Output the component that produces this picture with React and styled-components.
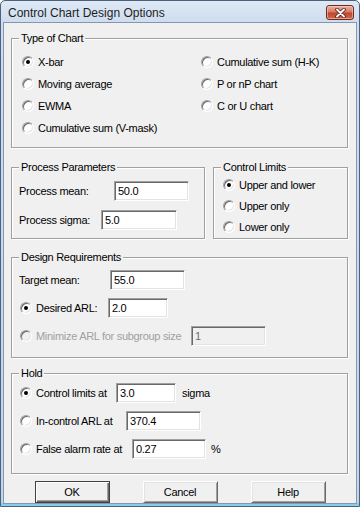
import styled, { createGlobalStyle } from "styled-components";

const GlobalStyle = createGlobalStyle`
  html, body {
    margin: 0;
    padding: 0;
    background: #ffffff;
  }
  body {
    font-family: "Liberation Sans", Arial, sans-serif;
    font-size: 11px;
    letter-spacing: -0.3px;
    color: #000000;
  }
`;

const Window = styled.div`
  width: 360px;
  height: 507px;
  box-sizing: border-box;
  display: flex;
  flex-direction: column;
  border: 1px solid #4c627c;
  border-radius: 5px 5px 0 0;
  padding: 0 2px 2px 2px;
  background: linear-gradient(
    180deg,
    #dfe9f5 0px,
    #cddcef 22px,
    #c2d5ec calc(100% - 3px),
    #86cdef calc(100% - 3px)
  );
`;

const TitleBar = styled.div`
  height: 21px;
  box-sizing: border-box;
  display: flex;
  justify-content: space-between;
  align-items: flex-start;
  padding-left: 5px;
`;

const Title = styled.span`
  font-size: 12px;
  letter-spacing: 0;
  line-height: 17px;
  margin-top: 4px;
  color: #1e1e1e;
`;

const CloseButton = styled.div`
  width: 28px;
  height: 15px;
  box-sizing: border-box;
  margin-top: 4px;
  margin-right: 3px;
  border: 1px solid #6e2b20;
  border-radius: 3px;
  background: linear-gradient(180deg, #eab4a4 0%, #d57a64 45%, #c0452c 55%, #cf6a4f 100%);
  box-shadow: inset 0 0 0 1px rgba(255, 220, 210, 0.5);
  display: flex;
  align-items: center;
  justify-content: center;
`;

const Client = styled.div`
  flex: 1;
  background: #f0f0f0;
  border: 1px solid #8497ae;
  padding: 9px 8px 0 7px;
  display: flex;
  flex-direction: column;
`;

const Group = styled.fieldset`
  margin: ${(p) => p.$mt || 0}px 0 0 0;
  min-width: 0;
  width: ${(p) => (p.$w ? `${p.$w}px` : "auto")};
  flex: ${(p) => (p.$w ? "none" : "1")};
  box-sizing: border-box;
  border: 1px solid #a0a0a0;
  box-shadow: inset 1px 1px 0 #ffffff, 1px 1px 0 #ffffff;
  padding: ${(p) => p.$pt}px 7px ${(p) => p.$pb}px 7px;
`;

const Legend = styled.legend`
  padding: 0 2px;
  margin: 0;
  line-height: 13px;
  background: #f0f0f0;
`;

const Stack = styled.div`
  display: flex;
  flex-direction: column;
  gap: ${(p) => p.$gap || 0}px;
  padding-left: ${(p) => p.$indent || 0}px;
`;

const ChartGrid = styled.div`
  display: grid;
  grid-template-columns: 179px 1fr;
  grid-template-rows: repeat(4, 22px);
  grid-auto-flow: column;
  padding-left: 2px;
`;

const GroupRow = styled.div`
  display: flex;
  gap: 8px;
  margin-top: 13px;
`;

const Row = styled.div`
  display: flex;
  align-items: center;
  height: ${(p) => p.$h || 20}px;
`;

const Caption = styled.span`
  flex: none;
  width: ${(p) => p.$w}px;
  white-space: nowrap;
`;

const Option = styled.label`
  flex: none;
  display: flex;
  align-items: center;
  gap: 4px;
  width: ${(p) => (p.$w ? `${p.$w}px` : "auto")};
  height: 100%;
  padding-left: 1px;
  box-sizing: border-box;
  white-space: nowrap;
  color: ${(p) => (p.$disabled ? "#a0a0a0" : "#000000")};
`;

const RadioMark = styled.span`
  flex: none;
  width: 12px;
  height: 12px;
  box-sizing: border-box;
  border-radius: 50%;
  border: 1px solid;
  border-color: #a0a0a0 #ffffff #ffffff #a0a0a0;
  box-shadow: inset 1px 1px 0 #696969, inset -1px -1px 0 #e3e3e3;
  background: ${(p) => (p.$disabled ? "#f0f0f0" : "#ffffff")};
  display: flex;
  align-items: center;
  justify-content: center;

  &::after {
    content: "";
    display: ${(p) => (p.$checked ? "block" : "none")};
    width: 4px;
    height: 4px;
    border-radius: 50%;
    background: #000000;
  }
`;

const Field = styled.input`
  flex: none;
  width: ${(p) => p.$w}px;
  height: 20px;
  box-sizing: border-box;
  margin: 0;
  padding: 0 3px;
  font-family: "Liberation Sans", Arial, sans-serif;
  font-size: 11px;
  letter-spacing: -0.3px;
  color: ${(p) => (p.disabled ? "#6d6d6d" : "#000000")};
  background: ${(p) => (p.disabled ? "#f0f0f0" : "#ffffff")};
  border: 1px solid;
  border-color: #a0a0a0 #ffffff #ffffff #a0a0a0;
  box-shadow: inset 1px 1px 0 #696969, inset -1px -1px 0 #e3e3e3;
  outline: none;
`;

const Unit = styled.span`
  margin-left: ${(p) => p.$gap}px;
`;

const ButtonBar = styled.div`
  display: flex;
  justify-content: center;
  gap: 33px;
  margin-top: 7px;
  padding-left: 1px;
`;

const Button = styled.button`
  width: 75px;
  height: 22px;
  box-sizing: border-box;
  margin: 0;
  padding: 0;
  font-family: "Liberation Sans", Arial, sans-serif;
  font-size: 11px;
  letter-spacing: -0.3px;
  color: #000000;
  background: #f0f0f0;
  border: 1px solid;
  border-color: ${(p) => (p.$default ? "#404040" : "#ffffff #696969 #696969 #ffffff")};
  box-shadow: ${(p) =>
    p.$default
      ? "inset 1px 1px 0 #ffffff, inset -1px -1px 0 #696969, inset -2px -2px 0 #a0a0a0"
      : "inset 1px 1px 0 #e3e3e3, inset -1px -1px 0 #a0a0a0"};
`;

const Radio = ({ checked, disabled, children, w }) => (
  <Option $w={w} $disabled={disabled}>
    <RadioMark $checked={checked} $disabled={disabled} />
    {children}
  </Option>
);

const App = () => {
  return (
    <>
      <GlobalStyle />
      <Window>
        <TitleBar>
          <Title>Control Chart Design Options</Title>
          <CloseButton>
            <svg width="13" height="10" viewBox="0 0 13 10">
              <path d="M3 1.5 L10 8.5 M10 1.5 L3 8.5" stroke="#5a1e14" strokeWidth="3.6" strokeLinecap="round" />
              <path d="M3 1.5 L10 8.5 M10 1.5 L3 8.5" stroke="#ffffff" strokeWidth="1.9" strokeLinecap="round" />
            </svg>
          </CloseButton>
        </TitleBar>

        <Client>
          <Group $pt={6} $pb={8}>
            <Legend>Type of Chart</Legend>
            <ChartGrid>
              <Radio checked>X-bar</Radio>
              <Radio>Moving average</Radio>
              <Radio>EWMA</Radio>
              <Radio>Cumulative sum (V-mask)</Radio>
              <Radio>Cumulative sum (H-K)</Radio>
              <Radio>P or nP chart</Radio>
              <Radio>C or U chart</Radio>
            </ChartGrid>
          </Group>

          <GroupRow>
            <Group $w={194} $pt={7} $pb={8}>
              <Legend>Process Parameters</Legend>
              <Stack $gap={9}>
                <Row>
                  <Caption $w={95}>Process mean:</Caption>
                  <Field $w={75} readOnly value="50.0" />
                </Row>
                <Row>
                  <Caption $w={82}>Process sigma:</Caption>
                  <Field $w={76} readOnly value="5.0" />
                </Row>
              </Stack>
            </Group>
            <Group $pt={0} $pb={0}>
              <Legend>Control Limits</Legend>
              <Stack $indent={1}>
                <Row $h={21}><Radio checked>Upper and lower</Radio></Row>
                <Row $h={21}><Radio>Upper only</Radio></Row>
                <Row $h={21}><Radio>Lower only</Radio></Row>
              </Stack>
            </Group>
          </GroupRow>

          <Group $mt={12} $pt={6} $pb={8}>
            <Legend>Design Requirements</Legend>
            <Stack $gap={8}>
              <Row>
                <Caption $w={91}>Target mean:</Caption>
                <Field $w={75} readOnly value="55.0" />
              </Row>
              <Row>
                <Radio checked w={89}>Desired ARL:</Radio>
                <Field $w={60} readOnly value="2.0" />
              </Row>
              <Row>
                <Radio disabled w={172}>Minimize ARL for subgroup size</Radio>
                <Field $w={75} disabled readOnly value="1" />
              </Row>
            </Stack>
          </Group>

          <Group $mt={9} $pt={3} $pb={12}>
            <Legend>Hold</Legend>
            <Stack $gap={8}>
              <Row>
                <Radio checked w={97}>Control limits at</Radio>
                <Field $w={60} readOnly value="3.0" />
                <Unit $gap={6}>sigma</Unit>
              </Row>
              <Row>
                <Radio w={107}>In-control ARL at</Radio>
                <Field $w={75} readOnly value="370.4" />
              </Row>
              <Row>
                <Radio w={113}>False alarm rate at</Radio>
                <Field $w={74} readOnly value="0.27" />
                <Unit $gap={5}>%</Unit>
              </Row>
            </Stack>
          </Group>

          <ButtonBar>
            <Button $default>OK</Button>
            <Button>Cancel</Button>
            <Button>Help</Button>
          </ButtonBar>
        </Client>
      </Window>
    </>
  );
};

export default App;
